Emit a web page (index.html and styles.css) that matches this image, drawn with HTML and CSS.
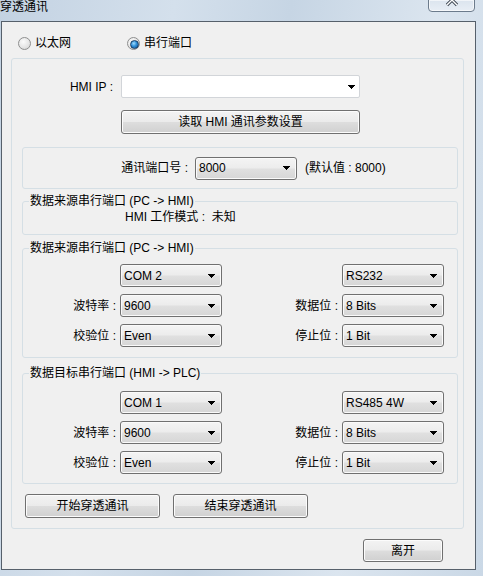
FILE: index.html
```html
<!DOCTYPE html>
<html lang="zh-CN">
<head>
  <meta charset="UTF-8">
  <title>穿透通讯</title>
  <link rel="stylesheet" href="styles.css">
</head>
<body>
  <div class="window">
    <!-- 标题栏 -->
    <div class="titlebar">
      <span class="title">穿透通讯</span>
      <div class="close-btn">
        <svg class="close-x" width="16" height="12" viewBox="0 0 16 12">
          <path d="M3 0 L13 10 M13 0 L3 10" stroke="#3b4450" stroke-width="3.2" fill="none"/>
          <path d="M3 0 L13 10 M13 0 L3 10" stroke="#ffffff" stroke-width="1.4" fill="none"/>
        </svg>
      </div>
    </div>

    <div class="client">
      <!-- 连接方式 -->
      <div class="radio-row">
        <label class="radio first"><span class="radio-circle"></span>以太网</label>
        <label class="radio"><span class="radio-circle checked"></span>串行端口</label>
      </div>

      <div class="panel">
        <div class="ip-row">
          <span class="ip-label">HMI IP :</span>
          <div class="combo edit ip-combo">
            <span class="combo-text"></span>
            <svg class="arrow" width="7" height="4"><path d="M0 0h7v1h-1v1h-1v1h-1v1h-1v-1h-1v-1h-1v-1h-1z"/></svg>
          </div>
        </div>
        <div class="btn read-btn">读取 HMI 通讯参数设置</div>

        <div class="group port-box">
          <span class="port-label">通讯端口号 :</span>
          <div class="combo port-combo">
            <span class="combo-text">8000</span>
            <svg class="arrow" width="7" height="4"><path d="M0 0h7v1h-1v1h-1v1h-1v1h-1v-1h-1v-1h-1v-1h-1z"/></svg>
          </div>
          <span class="port-hint">(默认值 : 8000)</span>
        </div>

        <div class="group mode-box">
          <span class="group-title">数据来源串行端口 (PC -&gt; HMI)</span>
          <span>HMI 工作模式 : &nbsp;未知</span>
        </div>

        <!-- 来源串口 -->
        <div class="group serial-box source">
          <span class="group-title">数据来源串行端口 (PC -&gt; HMI)</span>
          <span></span>
          <div class="combo"><span class="combo-text">COM 2</span><svg class="arrow" width="7" height="4"><path d="M0 0h7v1h-1v1h-1v1h-1v1h-1v-1h-1v-1h-1v-1h-1z"/></svg></div>
          <span></span>
          <div class="combo"><span class="combo-text">RS232</span><svg class="arrow" width="7" height="4"><path d="M0 0h7v1h-1v1h-1v1h-1v1h-1v-1h-1v-1h-1v-1h-1z"/></svg></div>

          <span class="field-label">波特率 :</span>
          <div class="combo"><span class="combo-text">9600</span><svg class="arrow" width="7" height="4"><path d="M0 0h7v1h-1v1h-1v1h-1v1h-1v-1h-1v-1h-1v-1h-1z"/></svg></div>
          <span class="field-label">数据位 :</span>
          <div class="combo"><span class="combo-text">8 Bits</span><svg class="arrow" width="7" height="4"><path d="M0 0h7v1h-1v1h-1v1h-1v1h-1v-1h-1v-1h-1v-1h-1z"/></svg></div>

          <span class="field-label">校验位 :</span>
          <div class="combo"><span class="combo-text">Even</span><svg class="arrow" width="7" height="4"><path d="M0 0h7v1h-1v1h-1v1h-1v1h-1v-1h-1v-1h-1v-1h-1z"/></svg></div>
          <span class="field-label">停止位 :</span>
          <div class="combo"><span class="combo-text">1 Bit</span><svg class="arrow" width="7" height="4"><path d="M0 0h7v1h-1v1h-1v1h-1v1h-1v-1h-1v-1h-1v-1h-1z"/></svg></div>
        </div>

        <!-- 目标串口 -->
        <div class="group serial-box target">
          <span class="group-title">数据目标串行端口 (HMI -&gt; PLC)</span>
          <span></span>
          <div class="combo"><span class="combo-text">COM 1</span><svg class="arrow" width="7" height="4"><path d="M0 0h7v1h-1v1h-1v1h-1v1h-1v-1h-1v-1h-1v-1h-1z"/></svg></div>
          <span></span>
          <div class="combo"><span class="combo-text">RS485 4W</span><svg class="arrow" width="7" height="4"><path d="M0 0h7v1h-1v1h-1v1h-1v1h-1v-1h-1v-1h-1v-1h-1z"/></svg></div>

          <span class="field-label">波特率 :</span>
          <div class="combo"><span class="combo-text">9600</span><svg class="arrow" width="7" height="4"><path d="M0 0h7v1h-1v1h-1v1h-1v1h-1v-1h-1v-1h-1v-1h-1z"/></svg></div>
          <span class="field-label">数据位 :</span>
          <div class="combo"><span class="combo-text">8 Bits</span><svg class="arrow" width="7" height="4"><path d="M0 0h7v1h-1v1h-1v1h-1v1h-1v-1h-1v-1h-1v-1h-1z"/></svg></div>

          <span class="field-label">校验位 :</span>
          <div class="combo"><span class="combo-text">Even</span><svg class="arrow" width="7" height="4"><path d="M0 0h7v1h-1v1h-1v1h-1v1h-1v-1h-1v-1h-1v-1h-1z"/></svg></div>
          <span class="field-label">停止位 :</span>
          <div class="combo"><span class="combo-text">1 Bit</span><svg class="arrow" width="7" height="4"><path d="M0 0h7v1h-1v1h-1v1h-1v1h-1v-1h-1v-1h-1v-1h-1z"/></svg></div>
        </div>

        <div class="action-row">
          <div class="btn">开始穿透通讯</div>
          <div class="btn">结束穿透通讯</div>
        </div>
      </div>

      <div class="footer">
        <div class="btn exit-btn">离开</div>
      </div>
    </div>
  </div>
</body>
</html>
```

FILE: styles.css
```css
/* === 基本 === */
* {
  box-sizing: border-box;
}

body {
  margin: 0;
  font-family: "Liberation Sans", "Noto Sans CJK SC", sans-serif;
  font-size: 12px;
  line-height: 14px;
  color: #000;
}

.window {
  width: 483px;
  height: 576px;
  overflow: hidden;
  background: linear-gradient(100deg, #c3d2e2 0%, #d4e0ec 30%, #c6d5e4 50%, #dbe5ef 75%, #cad8e6 100%);
}

/* === 标题栏 === */
.titlebar {
  position: relative;
  height: 21px;
}

.title {
  display: block;
}

.close-btn {
  position: absolute;
  top: -1px;
  right: 8px;
  width: 47px;
  height: 13px;
  border: 1px solid #6c7b8c;
  border-radius: 0 0 4px 4px;
  background: linear-gradient(#dbe4ee, #e8eef5);
  box-shadow: inset 0 0 0 1px rgba(255,255,255,0.6);
  overflow: hidden;
}

.close-x {
  display: block;
  margin: -5px auto 0;
}

/* === 客户区 === */
.client {
  margin-left: 1px;
  width: 475px;
  height: 549px;
  border: 1px solid #56606b;
  background: #f0f0f0;
}

.radio-row {
  display: flex;
  align-items: center;
  height: 14px;
  margin-top: 14px;
  padding-left: 16px;
}

.radio {
  display: flex;
  align-items: center;
  gap: 4px;
}

.radio.first {
  width: 109px;
}

.radio-circle {
  position: relative;
  width: 13px;
  height: 13px;
  border: 1px solid #8e8f8f;
  border-radius: 50%;
  background: radial-gradient(circle at 40% 35%, #fbfbfb 0%, #e6e6e6 55%, #cfcfcf 100%);
}

.radio-circle.checked::after {
  content: "";
  position: absolute;
  left: 2px;
  top: 2px;
  width: 7px;
  height: 7px;
  border-radius: 50%;
  border: 1px solid #1b3f66;
  background: radial-gradient(circle at 40% 35%, #9fdcff 0%, #2f8fd8 45%, #0f4f8f 100%);
}

/* === 外框 === */
.panel {
  margin: 8px 0 0 9px;
  width: 453px;
  height: 471px;
  border: 1px solid #d5dfe5;
  border-radius: 3px;
  padding-top: 16px;
}

.ip-row {
  display: flex;
  align-items: center;
  height: 23px;
}

.ip-label {
  width: 109px;
  padding-right: 8px;
  text-align: right;
}

/* === 下拉框 === */
.combo {
  display: flex;
  align-items: center;
  justify-content: space-between;
  width: 102px;
  height: 23px;
  padding: 0 6px 0 3px;
  border: 1px solid #707070;
  border-radius: 3px;
  background: linear-gradient(#f4f4f4 0%, #ececec 48%, #e0e0e0 52%, #d6d6d6 100%);
  box-shadow: inset 0 0 0 1px #fafafa;
}

.combo.edit {
  border-color: #d2d5d9;
  border-radius: 2px;
  background: #fff;
  box-shadow: none;
  padding-right: 4px;
}

.ip-combo {
  width: 239px;
}

.arrow {
  display: block;
  fill: #000;
}

/* === 按钮 === */
.btn {
  display: flex;
  align-items: center;
  justify-content: center;
  height: 24px;
  border: 1px solid #707070;
  border-radius: 3px;
  background: linear-gradient(#f3f3f3 0%, #ebebeb 48%, #dddddd 52%, #d0d0d0 100%);
  box-shadow: inset 0 0 0 1px #fcfcfc;
}

.read-btn {
  margin: 12px 0 0 109px;
  width: 239px;
}

/* === 分组框 === */
.group {
  position: relative;
  margin-left: 10px;
  width: 436px;
  border: 1px solid #d5dfe5;
  border-radius: 3px;
}

.group-title {
  position: absolute;
  top: -8px;
  left: 6px;
  padding: 0 1px;
  background: #f0f0f0;
}

.port-box {
  display: flex;
  align-items: center;
  margin-top: 13px;
  height: 42px;
}

.port-label {
  width: 172px;
  padding-right: 7px;
  text-align: right;
}

.port-hint {
  margin-left: 8px;
}

.mode-box {
  margin-top: 12px;
  height: 34px;
  padding: 8px 0 0 102px;
}

.serial-box {
  display: grid;
  grid-template-columns: 97px 102px 120px 102px;
  grid-auto-rows: 23px;
  row-gap: 7px;
}

.serial-box.source {
  margin-top: 13px;
  padding: 15px 0 10px;
}

.serial-box.target {
  margin-top: 15px;
  padding: 17px 0 9px;
}

.field-label {
  align-self: center;
  padding-right: 4px;
  text-align: right;
}

/* === 底部按钮 === */
.action-row {
  display: flex;
  gap: 13px;
  margin: 10px 0 0 13px;
}

.action-row .btn {
  width: 135px;
}

.footer {
  display: flex;
  justify-content: flex-end;
  margin-top: 10px;
  padding-right: 32px;
}

.exit-btn {
  width: 80px;
  height: 23px;
}
```
